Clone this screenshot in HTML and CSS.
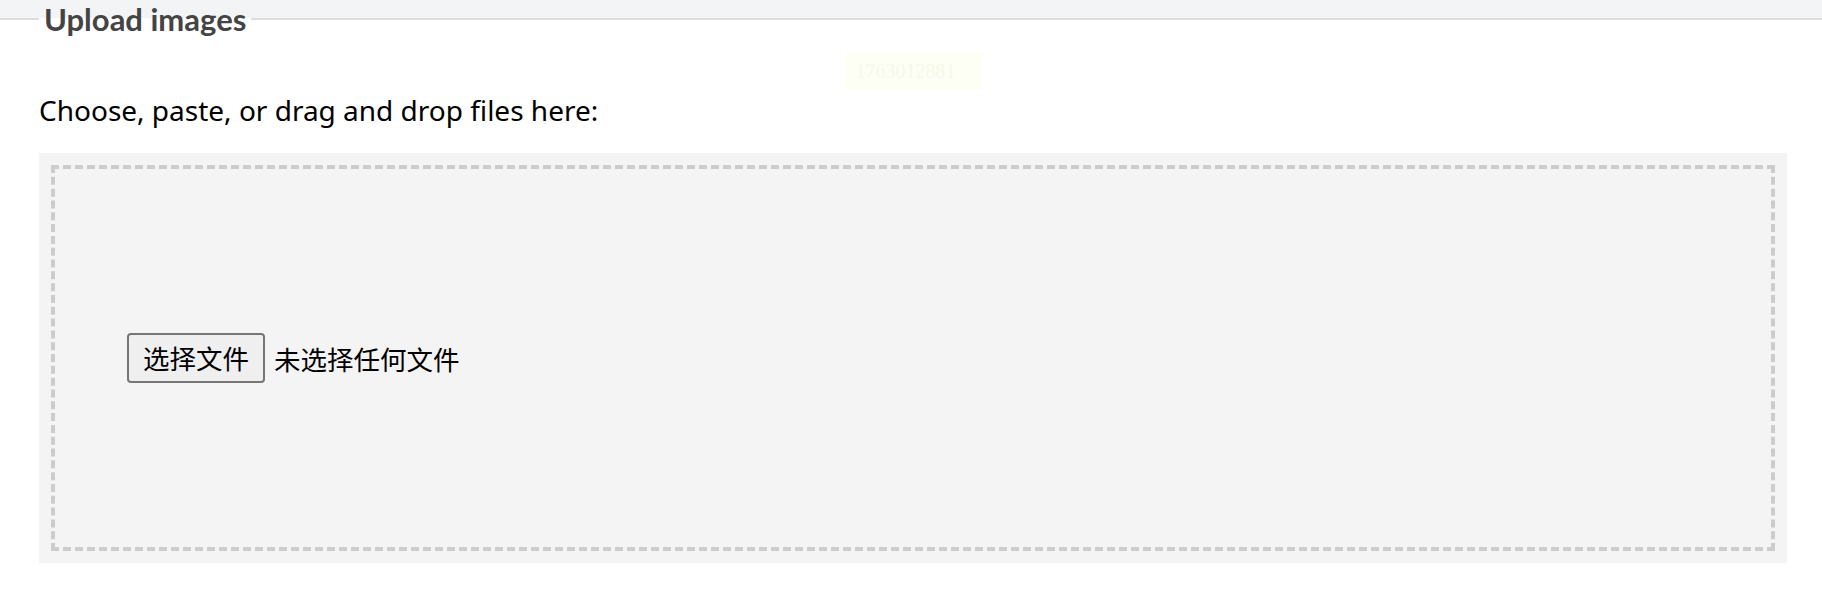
FILE: index.html
```html
<!DOCTYPE html>
<html>
<head>
<title>Upload images</title>
<meta charset="utf-8" />
<link rel="stylesheet" href="styles.css">
</head>
<body>
	<fieldset id="upload_box">
		<legend>Upload images</legend>
		<div class="stamp">1763012881</div>
		<p class="hint">Choose, paste, or drag and drop files here:</p>
		<div class="dropzone">
			<div class="dropzone_inner">
				<button class="bt_choose" type="button">选择文件</button>
				<span class="file_name">未选择任何文件</span>
			</div>
		</div>
	</fieldset>
</body>
</html>
```
FILE: styles.css
```css
body {
	margin: 0;
	background: #f3f4f6;
	font: 28px "Noto Sans", "Noto Sans CJK SC", sans-serif;
	color: #000;
}
#upload_box {
	margin: 0;
	min-width: 0;
	background: #fff;
	border: none;
	border-top: 2px solid #dcdcdc;
	padding: 15px 35px 27px 39px;
}
#upload_box legend {
	font: bold 31px/38px Lato, sans-serif;
	color: #444;
	padding: 0 5px;
}
.stamp {
	display: table;
	margin: 0 auto;
	padding: 7px 26px 7px 11px;
	background: #fdfff4;
	color: #f6f7ea;
	font: 20px/23px "Liberation Serif", serif;
}
.hint {
	margin: 1px 0 24px;
	line-height: 38px;
}
.dropzone {
	background: #f4f4f4;
	padding: 12px;
}
.dropzone_inner {
	border: 4px dashed #ccc;
	min-height: 378px;
	display: flex;
	align-items: center;
	padding-left: 72px;
	font: 26.5px "Noto Sans CJK SC", sans-serif;
}
.bt_choose {
	font: inherit;
	line-height: 34px;
	padding: 6px 14px;
	border: 2px solid #767676;
	border-radius: 4px;
	background: #efefef;
	color: #000;
	margin: 0;
}
.file_name {
	margin-left: 9px;
}
```
